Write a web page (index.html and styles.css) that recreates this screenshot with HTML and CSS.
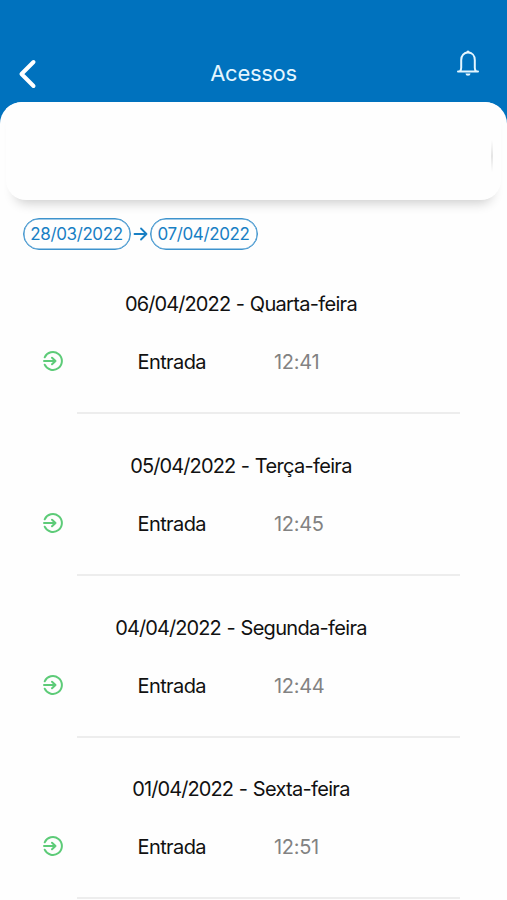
FILE: index.html
```html
<!DOCTYPE html>
<html lang="pt-BR">
<head>
<meta charset="utf-8">
<title>Acessos</title>
<link rel="stylesheet" href="styles.css">
</head>
<body>
<header class="header">
  <svg class="back" width="20" height="30" viewBox="0 0 20 30"><path d="M15.500 3 3.500 15 15.500 27"/></svg>
  <h1 class="title">Acessos</h1>
  <svg class="bell" width="24" height="28" viewBox="0 0 24 28"><path class="line" d="M2 22.400h20M4 22.200c1-1 1.200-1.900 1.200-3.400V11C5.200 6.500 8 3.600 12 3.600s6.800 2.900 6.800 7.400v7.800c0 1.500.2 2.400 1.200 3.400"/><path class="fill" d="M10.300 3.500a1.700 1.900 0 0 1 3.400 0zM9.500 24.500h5a2.500 2.300 0 0 1-5 0z"/></svg>
</header>
<main class="sheet">
  <section class="card"><span class="edge"></span></section>
  <div class="range">
    <span class="pill">28/03/2022</span>
    <svg class="arrow" width="19" height="16" viewBox="0 0 19 16"><path d="M3.500 8h12M10 2.500 15.500 8 10 13.500"/></svg>
    <span class="pill">07/04/2022</span>
  </div>
  <section class="day">
    <h2 class="date"><span class="digits">06/04/2022</span> - Quarta-feira</h2>
    <div class="entry"><svg class="in" width="22" height="22" viewBox="0 0 22 22"><path d="M2.700 7.300A9 9 0 1 1 2.700 14.700M2 11h11.500M10 7.700l3.500 3.300-3.500 3.300"/></svg><span class="kind">Entrada</span><span class="time">12:41</span></div>
  </section>
  <section class="day">
    <h2 class="date"><span class="digits">05/04/2022</span> - Terça-feira</h2>
    <div class="entry"><svg class="in" width="22" height="22" viewBox="0 0 22 22"><path d="M2.700 7.300A9 9 0 1 1 2.700 14.700M2 11h11.500M10 7.700l3.500 3.300-3.500 3.300"/></svg><span class="kind">Entrada</span><span class="time">12:45</span></div>
  </section>
  <section class="day">
    <h2 class="date"><span class="digits">04/04/2022</span> - Segunda-feira</h2>
    <div class="entry"><svg class="in" width="22" height="22" viewBox="0 0 22 22"><path d="M2.700 7.300A9 9 0 1 1 2.700 14.700M2 11h11.500M10 7.700l3.500 3.300-3.500 3.300"/></svg><span class="kind">Entrada</span><span class="time">12:44</span></div>
  </section>
  <section class="day">
    <h2 class="date"><span class="digits">01/04/2022</span> - Sexta-feira</h2>
    <div class="entry"><svg class="in" width="22" height="22" viewBox="0 0 22 22"><path d="M2.700 7.300A9 9 0 1 1 2.700 14.700M2 11h11.500M10 7.700l3.500 3.300-3.500 3.300"/></svg><span class="kind">Entrada</span><span class="time">12:51</span></div>
  </section>
</main>
</body>
</html>
```
FILE: styles.css
```css
* { box-sizing: border-box; }
html { background: #fefefe; }
body {
  margin: 0;
  height: 900px;
  overflow: hidden;
  font-family: Inter, "Liberation Sans", sans-serif;
  color: #111;
  background: linear-gradient(#0072be 140px, #fefefe 140px);
}
svg { display: block; fill: none; stroke-linecap: round; stroke-linejoin: round; }
.header {
  height: 102.400px;
  display: grid;
  grid-template-columns: 60px 1fr 60px;
  align-items: start;
  color: #e4f6ff;
}
.back { margin: 59px 0 0 18px; stroke: #fff; stroke-width: 4; }
.title {
  margin: 57.500px 0 0;
  font-size: 22px;
  line-height: 30px;
  font-weight: 400;
  letter-spacing: -.3px;
  text-align: center;
}
.bell { margin: 49px 0 0 9px; }
.bell .line { stroke: #e4f6ff; stroke-width: 2; }
.bell .fill { fill: #e4f6ff; }
.sheet {
  height: 798px;
  overflow: hidden;
  border-radius: 22px 22px 0 0;
  background: #fefefe;
}
.card {
  height: 98px;
  margin: 0 6px;
  padding: 38px 8px 0 0;
  display: flex;
  justify-content: flex-end;
  border-radius: 0 0 20px 20px;
  background: #fefefe;
  box-shadow: 0 12px 12px -9px rgba(0, 0, 0, .2);
}
.edge {
  width: 2px;
  height: 32px;
  background: linear-gradient(transparent, #e4e4e4 50%, transparent);
}
.range {
  display: flex;
  align-items: center;
  height: 32px;
  margin: 17.500px 0 0 22.500px;
}
.pill {
  width: 108px;
  height: 32px;
  border: 1px solid #3e93cd;
  box-shadow: inset 0 0 0 .5px #3e93cd;
  border-radius: 16px;
  font-size: 17px;
  line-height: 31px;
  letter-spacing: -.38px;
  text-align: center;
  white-space: nowrap;
  color: #187fc4;
}
.arrow { stroke: #187fc4; stroke-width: 1.800; }
.day { height: 161.700px; }
.range + .day { margin-top: 39.300px; }
.date {
  width: 482px;
  margin: 0;
  font-size: 20px;
  line-height: 30px;
  font-weight: 400;
  letter-spacing: -.68px;
  word-spacing: .6px;
  text-align: center;
  white-space: nowrap;
}
.digits { letter-spacing: -.9px; }
.entry {
  display: grid;
  grid-template-columns: 95.500px 136.500px 1fr;
  align-items: center;
  height: 30px;
  margin: 28px 0 0 42px;
  font-size: 20px;
  line-height: 30px;
}
.kind { letter-spacing: -.6px; }
.time { color: #828282; letter-spacing: -.3px; }
.in { margin-bottom: 2px; stroke: #5dcb78; stroke-width: 2; }
.day::after {
  content: "";
  display: block;
  width: 383px;
  height: 2px;
  margin: 35px 0 0 77px;
  background: #ededed;
}
```
